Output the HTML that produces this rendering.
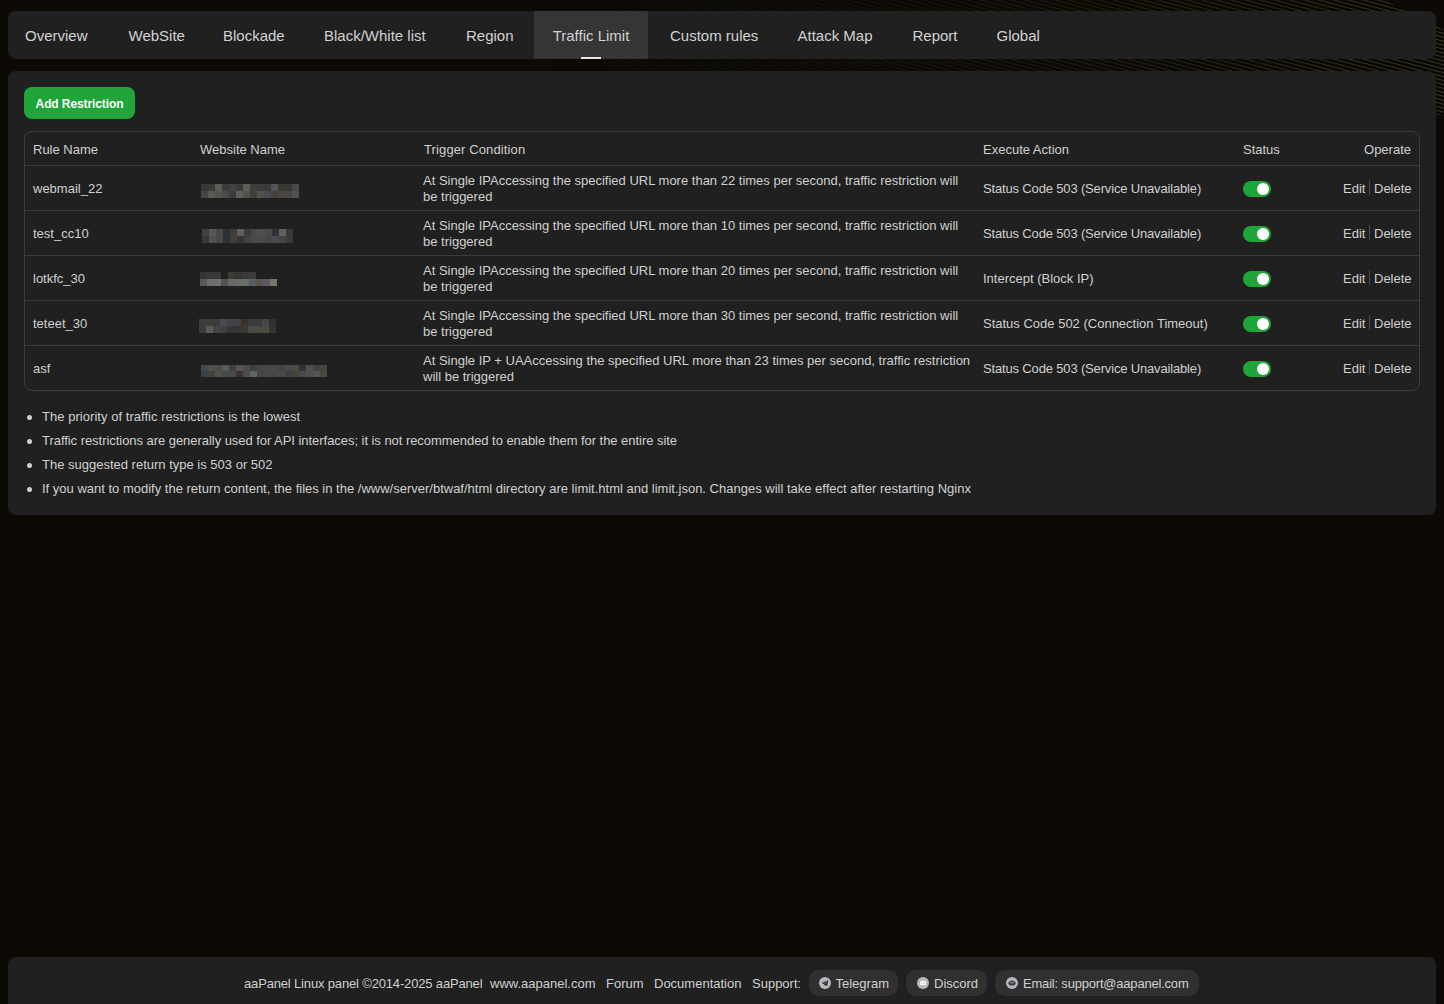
<!DOCTYPE html><html><head><meta charset="utf-8"><title>Traffic Limit</title><style>
*{box-sizing:border-box;margin:0;padding:0}
html,body{width:1444px;height:1004px;overflow:hidden}
body{background:#0d0a06;font-family:"Liberation Sans",sans-serif;position:relative}
.bgstripe{position:absolute;left:0;top:0;width:1444px;height:130px;overflow:hidden}
.tabs{position:absolute;left:8px;top:11px;width:1428px;height:48px;background:#202020;border-radius:8px;overflow:hidden}
.tab{position:absolute;top:1px;height:48px;line-height:48px;font-size:15px;color:#d2d2d2;white-space:nowrap}
.tab.active{background:#353535;top:0;padding-top:1px}
.tab.active:after{content:"";position:absolute;left:50%;margin-left:-10px;bottom:0;width:20px;height:2px;background:#e8e8e8}
.card{position:absolute;left:8px;top:71px;width:1428px;height:444px;background:#202020;border-radius:8px}
.btn{position:absolute;left:24px;top:87px;width:111px;height:32px;border-radius:8px;background:#20a53a;color:#fff;font-size:12px;font-weight:bold;letter-spacing:-0.1px;line-height:34px;text-align:center}
.tbl{position:absolute;left:24px;top:131px;width:1396px;height:260px;border:1px solid #3c3c3c;border-radius:8px}
.hl{position:absolute;left:25px;width:1394px;height:1px;background:#3c3c3c}
.t{position:absolute;font-size:13px;line-height:16px;color:#d0d0d0;white-space:nowrap}
.blur{position:absolute;filter:blur(0.4px)}
.tog{position:absolute;left:1243px;width:28px;height:16px;border-radius:8px;background:#20a53a}
.tog:after{content:"";position:absolute;left:14px;top:2px;width:12px;height:12px;border-radius:50%;background:#fff}
.sep{position:absolute;left:1369px;width:1px;height:15px;background:#4a4a4a}
.notes{position:absolute;left:0;top:404px}
.note{position:absolute;left:42px;font-size:13px;line-height:24px;color:#d0d0d0;white-space:nowrap}
.dot{position:absolute;left:27px;width:5px;height:5px;border-radius:50%;background:#d0d0d0}
.footer{position:absolute;left:8px;top:957px;width:1428px;height:60px;background:#202020;border-radius:8px}
.f{position:absolute;top:971px;font-size:13px;line-height:26px;color:#d0d0d0;white-space:nowrap}
.pill{position:absolute;top:970px;height:26px;border-radius:10px;background:#303030}
.ico{position:absolute;top:977px;width:12px;height:12px}
</style></head><body>
<svg class="bgstripe" width="1444" height="130" viewBox="0 0 1444 130"><defs>
<linearGradient id="fade" x1="0" y1="0" x2="1444" y2="0" gradientUnits="userSpaceOnUse"><stop offset="0.38" stop-color="#fff" stop-opacity="0"/><stop offset="0.65" stop-color="#fff" stop-opacity="0.2"/><stop offset="0.88" stop-color="#fff" stop-opacity="0.6"/><stop offset="1" stop-color="#fff" stop-opacity="0.9"/></linearGradient>
<mask id="m"><polygon points="250,0 1384,0 1444,30 1444,115 250,62" fill="url(#fade)"/></mask>
<pattern id="st" width="40" height="3.8" patternUnits="userSpaceOnUse" patternTransform="rotate(15)"><rect width="40" height="3.8" fill="#040302"/><rect width="40" height="1.3" fill="#3b3a1e"/></pattern>
</defs><rect width="1444" height="130" fill="url(#st)" mask="url(#m)"/></svg>
<div class="tabs">
<div class="tab" style="left:17px">Overview</div>
<div class="tab" style="left:120.5px">WebSite</div>
<div class="tab" style="left:215px">Blockade</div>
<div class="tab" style="left:316px">Black/White list</div>
<div class="tab" style="left:458px">Region</div>
<div class="tab active" style="left:526px;width:114px;text-align:center">Traffic Limit</div>
<div class="tab" style="left:662px">Custom rules</div>
<div class="tab" style="left:789.5px">Attack Map</div>
<div class="tab" style="left:904.5px">Report</div>
<div class="tab" style="left:988.5px">Global</div>
</div>
<div class="card"></div>
<div class="btn">Add Restriction</div>
<div class="tbl"></div>
<div class="t" style="left:33px;top:142px">Rule Name</div>
<div class="t" style="left:200px;top:142px">Website Name</div>
<div class="t" style="left:424px;top:142px;letter-spacing:0.12px">Trigger Condition</div>
<div class="t" style="left:983px;top:142px">Execute Action</div>
<div class="t" style="left:1243px;top:142px">Status</div>
<div class="t" style="left:1311px;width:100px;text-align:right;top:142px">Operate</div>
<div class="hl" style="top:165px"></div>
<div class="hl" style="top:210px"></div>
<div class="hl" style="top:255px"></div>
<div class="hl" style="top:300px"></div>
<div class="hl" style="top:345px"></div>
<div class="t" style="left:33px;top:181px">webmail_22</div>
<svg class="blur" style="left:201px;top:184px" width="98" height="14" viewBox="0 0 98 14"><rect x="0" y="0" width="7" height="7" fill="#38383b"/><rect x="7" y="0" width="7" height="7" fill="#3a3a38"/><rect x="14" y="0" width="7" height="7" fill="#5a5c58"/><rect x="21" y="0" width="7" height="7" fill="#3c3c3a"/><rect x="28" y="0" width="7" height="7" fill="#444242"/><rect x="35" y="0" width="7" height="7" fill="#3a3a3a"/><rect x="42" y="0" width="7" height="7" fill="#5e5d58"/><rect x="49" y="0" width="7" height="7" fill="#3e3e3d"/><rect x="56" y="0" width="7" height="7" fill="#3c3c3a"/><rect x="63" y="0" width="7" height="7" fill="#3a3a3a"/><rect x="70" y="0" width="7" height="7" fill="#50535a"/><rect x="77" y="0" width="7" height="7" fill="#3e3a30"/><rect x="84" y="0" width="7" height="7" fill="#383836"/><rect x="91" y="0" width="7" height="7" fill="#4a4844"/><rect x="0" y="7" width="7" height="7" fill="#42464a"/><rect x="7" y="7" width="7" height="7" fill="#5a5b58"/><rect x="14" y="7" width="7" height="7" fill="#52524e"/><rect x="21" y="7" width="7" height="7" fill="#4c4c46"/><rect x="28" y="7" width="7" height="7" fill="#363c40"/><rect x="35" y="7" width="7" height="7" fill="#606062"/><rect x="42" y="7" width="7" height="7" fill="#545048"/><rect x="49" y="7" width="7" height="7" fill="#404040"/><rect x="56" y="7" width="7" height="7" fill="#52524c"/><rect x="63" y="7" width="7" height="7" fill="#484c50"/><rect x="70" y="7" width="7" height="7" fill="#444044"/><rect x="77" y="7" width="7" height="7" fill="#4a4640"/><rect x="84" y="7" width="7" height="7" fill="#4a4844"/><rect x="91" y="7" width="7" height="7" fill="#505450"/></svg>
<div class="t" style="left:423px;top:173px">At Single IPAccessing the specified URL more than 22 times per second, traffic restriction will<br>be triggered</div>
<div class="t" style="left:983px;top:181px;letter-spacing:-0.16px;">Status Code 503 (Service Unavailable)</div>
<div class="tog" style="top:181px"></div>
<div class="t" style="left:1343px;top:181px">Edit</div>
<div class="sep" style="top:180px"></div>
<div class="t" style="left:1374px;top:181px">Delete</div>
<div class="t" style="left:33px;top:226px">test_cc10</div>
<svg class="blur" style="left:201.5px;top:228.5px" width="91" height="14" viewBox="0 0 91 14"><rect x="0" y="0" width="7" height="7" fill="#404240"/><rect x="7" y="0" width="7" height="7" fill="#55575a"/><rect x="14" y="0" width="7" height="7" fill="#4a4846"/><rect x="21" y="0" width="7" height="7" fill="#2a3236"/><rect x="28" y="0" width="7" height="7" fill="#403c38"/><rect x="35" y="0" width="7" height="7" fill="#606060"/><rect x="42" y="0" width="7" height="7" fill="#3c3c3c"/><rect x="49" y="0" width="7" height="7" fill="#4a4a4a"/><rect x="56" y="0" width="7" height="7" fill="#4c4e50"/><rect x="63" y="0" width="7" height="7" fill="#484846"/><rect x="70" y="0" width="7" height="7" fill="#30303a"/><rect x="77" y="0" width="7" height="7" fill="#606060"/><rect x="84" y="0" width="7" height="7" fill="#3a3830"/><rect x="0" y="7" width="7" height="7" fill="#36383c"/><rect x="7" y="7" width="7" height="7" fill="#505050"/><rect x="14" y="7" width="7" height="7" fill="#4a4844"/><rect x="21" y="7" width="7" height="7" fill="#2a3236"/><rect x="28" y="7" width="7" height="7" fill="#443e38"/><rect x="35" y="7" width="7" height="7" fill="#343434"/><rect x="42" y="7" width="7" height="7" fill="#444040"/><rect x="49" y="7" width="7" height="7" fill="#4a4a4a"/><rect x="56" y="7" width="7" height="7" fill="#4a4a4a"/><rect x="63" y="7" width="7" height="7" fill="#464644"/><rect x="70" y="7" width="7" height="7" fill="#484a4c"/><rect x="77" y="7" width="7" height="7" fill="#444446"/><rect x="84" y="7" width="7" height="7" fill="#3a3a36"/></svg>
<div class="t" style="left:423px;top:218px">At Single IPAccessing the specified URL more than 10 times per second, traffic restriction will<br>be triggered</div>
<div class="t" style="left:983px;top:226px;letter-spacing:-0.16px;">Status Code 503 (Service Unavailable)</div>
<div class="tog" style="top:226px"></div>
<div class="t" style="left:1343px;top:226px">Edit</div>
<div class="sep" style="top:225px"></div>
<div class="t" style="left:1374px;top:226px">Delete</div>
<div class="t" style="left:33px;top:271px">lotkfc_30</div>
<svg class="blur" style="left:199.5px;top:271.5px" width="77" height="14" viewBox="0 0 77 14"><rect x="0" y="0" width="7" height="7" fill="#343432"/><rect x="7" y="0" width="7" height="7" fill="#383636"/><rect x="14" y="0" width="7" height="7" fill="#363a38"/><rect x="28" y="0" width="7" height="7" fill="#3a3a36"/><rect x="35" y="0" width="7" height="7" fill="#343430"/><rect x="42" y="0" width="7" height="7" fill="#383c3a"/><rect x="49" y="0" width="7" height="7" fill="#3c3c3c"/><rect x="0" y="7" width="7" height="7" fill="#5a5a5a"/><rect x="7" y="7" width="7" height="7" fill="#6e6c6e"/><rect x="14" y="7" width="7" height="7" fill="#707070"/><rect x="21" y="7" width="7" height="7" fill="#54544e"/><rect x="28" y="7" width="7" height="7" fill="#646868"/><rect x="35" y="7" width="7" height="7" fill="#6a6a66"/><rect x="42" y="7" width="7" height="7" fill="#6a6e6c"/><rect x="49" y="7" width="7" height="7" fill="#5a5e64"/><rect x="56" y="7" width="7" height="7" fill="#5a544c"/><rect x="63" y="7" width="7" height="7" fill="#5a5a6a"/><rect x="70" y="7" width="7" height="7" fill="#7a746a"/></svg>
<div class="t" style="left:423px;top:263px">At Single IPAccessing the specified URL more than 20 times per second, traffic restriction will<br>be triggered</div>
<div class="t" style="left:983px;top:271px;">Intercept (Block IP)</div>
<div class="tog" style="top:271px"></div>
<div class="t" style="left:1343px;top:271px">Edit</div>
<div class="sep" style="top:270px"></div>
<div class="t" style="left:1374px;top:271px">Delete</div>
<div class="t" style="left:33px;top:316px">teteet_30</div>
<svg class="blur" style="left:198.5px;top:318.5px" width="77" height="14" viewBox="0 0 77 14"><rect x="0" y="0" width="7" height="7" fill="#3a3e40"/><rect x="7" y="0" width="7" height="7" fill="#3c3e3a"/><rect x="14" y="0" width="7" height="7" fill="#3c3c3a"/><rect x="21" y="0" width="7" height="7" fill="#484c50"/><rect x="28" y="0" width="7" height="7" fill="#444244"/><rect x="35" y="0" width="7" height="7" fill="#444244"/><rect x="42" y="0" width="7" height="7" fill="#3a302c"/><rect x="49" y="0" width="7" height="7" fill="#3c3c3c"/><rect x="56" y="0" width="7" height="7" fill="#3a3a3a"/><rect x="63" y="0" width="7" height="7" fill="#444846"/><rect x="70" y="0" width="7" height="7" fill="#303030"/><rect x="0" y="7" width="7" height="7" fill="#3c3c3e"/><rect x="7" y="7" width="7" height="7" fill="#5a5c5a"/><rect x="14" y="7" width="7" height="7" fill="#46463e"/><rect x="21" y="7" width="7" height="7" fill="#3a4046"/><rect x="28" y="7" width="7" height="7" fill="#363638"/><rect x="35" y="7" width="7" height="7" fill="#363638"/><rect x="42" y="7" width="7" height="7" fill="#3e3830"/><rect x="49" y="7" width="7" height="7" fill="#4a4c4a"/><rect x="56" y="7" width="7" height="7" fill="#4a4848"/><rect x="63" y="7" width="7" height="7" fill="#4e4a40"/><rect x="70" y="7" width="7" height="7" fill="#363430"/></svg>
<div class="t" style="left:423px;top:308px">At Single IPAccessing the specified URL more than 30 times per second, traffic restriction will<br>be triggered</div>
<div class="t" style="left:983px;top:316px;">Status Code 502 (Connection Timeout)</div>
<div class="tog" style="top:316px"></div>
<div class="t" style="left:1343px;top:316px">Edit</div>
<div class="sep" style="top:315px"></div>
<div class="t" style="left:1374px;top:316px">Delete</div>
<div class="t" style="left:33px;top:361px">asf</div>
<svg class="blur" style="left:200.5px;top:364.5px" width="126" height="12" viewBox="0 0 126 12"><rect x="0" y="0" width="7" height="6" fill="#444a4e"/><rect x="7" y="0" width="7" height="6" fill="#505050"/><rect x="14" y="0" width="7" height="6" fill="#4e4c46"/><rect x="21" y="0" width="7" height="6" fill="#545a5e"/><rect x="28" y="0" width="7" height="6" fill="#3e4240"/><rect x="35" y="0" width="7" height="6" fill="#5a5058"/><rect x="42" y="0" width="7" height="6" fill="#4a4c48"/><rect x="49" y="0" width="7" height="6" fill="#3e3e38"/><rect x="56" y="0" width="7" height="6" fill="#464648"/><rect x="63" y="0" width="7" height="6" fill="#484848"/><rect x="70" y="0" width="7" height="6" fill="#484848"/><rect x="77" y="0" width="7" height="6" fill="#444644"/><rect x="84" y="0" width="7" height="6" fill="#4a4a4c"/><rect x="91" y="0" width="7" height="6" fill="#4c4a46"/><rect x="98" y="0" width="7" height="6" fill="#303234"/><rect x="105" y="0" width="7" height="6" fill="#50504c"/><rect x="112" y="0" width="7" height="6" fill="#464242"/><rect x="119" y="0" width="7" height="6" fill="#444440"/><rect x="0" y="6" width="7" height="6" fill="#3a4044"/><rect x="7" y="6" width="7" height="6" fill="#44423e"/><rect x="14" y="6" width="7" height="6" fill="#54524c"/><rect x="21" y="6" width="7" height="6" fill="#484a48"/><rect x="28" y="6" width="7" height="6" fill="#484a48"/><rect x="35" y="6" width="7" height="6" fill="#3a3038"/><rect x="42" y="6" width="7" height="6" fill="#4a4e46"/><rect x="49" y="6" width="7" height="6" fill="#606466"/><rect x="56" y="6" width="7" height="6" fill="#4a4440"/><rect x="63" y="6" width="7" height="6" fill="#484a48"/><rect x="70" y="6" width="7" height="6" fill="#4a4648"/><rect x="77" y="6" width="7" height="6" fill="#484a4c"/><rect x="84" y="6" width="7" height="6" fill="#403e44"/><rect x="91" y="6" width="7" height="6" fill="#46443a"/><rect x="98" y="6" width="7" height="6" fill="#4a4a46"/><rect x="105" y="6" width="7" height="6" fill="#485054"/><rect x="112" y="6" width="7" height="6" fill="#545454"/><rect x="119" y="6" width="7" height="6" fill="#4e4640"/></svg>
<div class="t" style="left:423px;top:353px">At Single IP + UAAccessing the specified URL more than 23 times per second, traffic restriction<br>will be triggered</div>
<div class="t" style="left:983px;top:361px;letter-spacing:-0.16px;">Status Code 503 (Service Unavailable)</div>
<div class="tog" style="top:361px"></div>
<div class="t" style="left:1343px;top:361px">Edit</div>
<div class="sep" style="top:360px"></div>
<div class="t" style="left:1374px;top:361px">Delete</div>
<div class="dot" style="top:415px"></div>
<div class="note" style="top:405px;letter-spacing:0.04px">The priority of traffic restrictions is the lowest</div>
<div class="dot" style="top:439px"></div>
<div class="note" style="top:429px;letter-spacing:-0.045px">Traffic restrictions are generally used for API interfaces; it is not recommended to enable them for the entire site</div>
<div class="dot" style="top:463px"></div>
<div class="note" style="top:453px;letter-spacing:0">The suggested return type is 503 or 502</div>
<div class="dot" style="top:487px"></div>
<div class="note" style="top:477px;letter-spacing:0">If you want to modify the return content, the files in the /www/server/btwaf/html directory are limit.html and limit.json. Changes will take effect after restarting Nginx</div>
<div class="footer"></div>
<div class="f" style="left:244px"><span style='letter-spacing:-0.16px'>aaPanel Linux panel ©2014-2025 aaPanel</span></div>
<div class="f" style="left:490px">www.aapanel.com</div>
<div class="f" style="left:606px">Forum</div>
<div class="f" style="left:654px">Documentation</div>
<div class="f" style="left:752px">Support:</div>
<div class="pill" style="left:809px;width:89px"></div>
<svg class="ico" style="left:819px" width="12" height="12" viewBox="0 0 12 12"><circle cx="6" cy="6" r="6" fill="#b5b9be"/><path d="M2.6 5.9 L9.2 3.2 L8.1 9.3 L6.2 7.7 L5.2 8.7 L5.1 7.0 Z" fill="#262626"/><path d="M5.1 7.0 L8.2 4.3" stroke="#b5b9be" stroke-width="0.6"/></svg>
<div class="f" style="left:835.5px">Telegram</div>
<div class="pill" style="left:906px;width:81px"></div>
<svg class="ico" style="left:917px" width="12" height="12" viewBox="0 0 12 12"><circle cx="6" cy="6" r="6" fill="#b5b9be"/><path d="M3.2 4.3 Q6 3.3 8.8 4.3 L9.2 7.6 Q6 8.8 2.8 7.6 Z" fill="#fafafa"/><circle cx="4.8" cy="6.1" r="0.6" fill="#9a9ea3"/><circle cx="7.2" cy="6.1" r="0.6" fill="#9a9ea3"/></svg>
<div class="f" style="left:934px">Discord</div>
<div class="pill" style="left:995px;width:204px"></div>
<svg class="ico" style="left:1006px" width="12" height="12" viewBox="0 0 12 12"><circle cx="6" cy="6" r="6" fill="#b5b9be"/><ellipse cx="6" cy="6" rx="3.6" ry="2.6" fill="#3a3a3a"/><path d="M3.6 4.4 L6 6.4 L8.4 4.4" stroke="#c8cbd0" stroke-width="0.8" fill="none"/></svg>
<div class="f" style="left:1023px"><span style='letter-spacing:-0.2px'>Email: support@aapanel.com</span></div>
</body></html>
